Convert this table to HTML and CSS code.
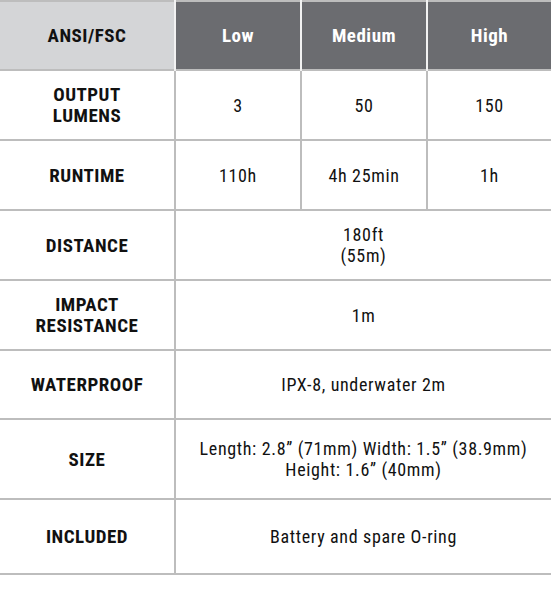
FILE: index.html
```html
<!DOCTYPE html>
<html>
<head>
<meta charset="utf-8">
<link rel="stylesheet" href="styles.css">
</head>
<body>
<table class="spec">
  <colgroup>
    <col class="c-label">
    <col class="c-val">
    <col class="c-val">
    <col class="c-last">
  </colgroup>
  <thead>
    <tr class="row-head">
      <th class="h-label">ANSI/FSC</th>
      <th class="h-mode">Low</th>
      <th class="h-mode">Medium</th>
      <th class="h-mode">High</th>
    </tr>
  </thead>
  <tbody>
    <tr class="r70">
      <th>OUTPUT<br>LUMENS</th>
      <td>3</td>
      <td>50</td>
      <td>150</td>
    </tr>
    <tr class="r70">
      <th>RUNTIME</th>
      <td>110h</td>
      <td>4h 25min</td>
      <td>1h</td>
    </tr>
    <tr class="r70">
      <th>DISTANCE</th>
      <td colspan="3">180ft<br>(55m)</td>
    </tr>
    <tr class="r70">
      <th>IMPACT<br>RESISTANCE</th>
      <td colspan="3">1m</td>
    </tr>
    <tr class="r69">
      <th>WATERPROOF</th>
      <td colspan="3">IPX-8, underwater 2m</td>
    </tr>
    <tr class="r80">
      <th>SIZE</th>
      <td colspan="3">Length: 2.8” (71mm) Width: 1.5” (38.9mm)<br>Height: 1.6” (40mm)</td>
    </tr>
    <tr class="r75">
      <th>INCLUDED</th>
      <td colspan="3">Battery and spare O-ring</td>
    </tr>
  </tbody>
</table>
</body>
</html>
```

FILE: styles.css
```css
html, body {
  margin: 0;
  padding: 0;
  background: #ffffff;
}

.spec {
  width: 551px;
  border-collapse: collapse;
  table-layout: fixed;
  font-family: Roboto, "Liberation Sans", Arial, sans-serif;
  font-stretch: 75%;
  font-size: 18px;
  line-height: 21px;
  letter-spacing: 0.65px;
  color: #111111;
  border-top: 2px solid #bdbdbd;
  border-bottom: 2px solid #bdbdbd;
}

.c-label { width: 175px; }
.c-val { width: 126px; }
.c-last { width: 124px; }

.spec th,
.spec td {
  padding: 0;
  text-align: center;
  vertical-align: middle;
  border-top: 2px solid #bdbdbd;
  border-left: 2px solid #bdbdbd;
}

.spec tr > :first-child {
  border-left: none;
}

.spec tbody th {
  font-weight: bold;
  font-size: 19px;
  line-height: 21px;
  letter-spacing: 0.5px;
}

.row-head th {
  height: 67px;
  font-weight: bold;
  font-size: 19px;
  letter-spacing: 0.5px;
  color: #ffffff;
  border-top: none;
  border-left: 2px solid #f2f2f2;
}

.row-head .h-label {
  background: #d4d5d7;
  color: #111111;
  border-left: none;
}

.row-head .h-mode {
  background: #6b6c70;
}

.r70 > * { height: 68px; }
.r69 > * { height: 67px; }
.r80 > * { height: 78px; }
.r75 > * { height: 73px; }
```
